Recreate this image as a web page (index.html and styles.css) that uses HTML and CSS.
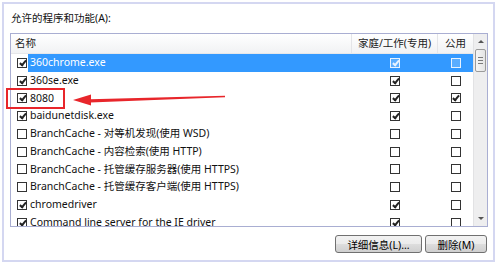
FILE: index.html
```html
<!DOCTYPE html>
<html lang="zh-CN">
<head>
    <meta charset="UTF-8">
    <title>允许的程序和功能</title>
    <link rel="stylesheet" href="styles.css">
</head>
<body>
    <div class="frame">
        <div class="caption">允许的程序和功能(A):</div>

        <div class="listbox">
            <div class="columns">
                <div class="row head">
                    <div class="cell name">名称</div>
                    <div class="cell mid">家庭/工作(专用)</div>
                    <div class="cell mid">公用</div>
                </div>

                <div class="row selected">
                    <div class="cell name"><span class="cb on"></span><span class="label">360chrome.exe</span></div>
                    <div class="cell mid"><span class="cb on"></span></div>
                    <div class="cell mid"><span class="cb"></span></div>
                </div>
                <div class="row">
                    <div class="cell name"><span class="cb on"></span><span class="label">360se.exe</span></div>
                    <div class="cell mid"><span class="cb on"></span></div>
                    <div class="cell mid"><span class="cb"></span></div>
                </div>
                <div class="row">
                    <div class="cell name"><span class="cb on"></span><span class="label">8080</span></div>
                    <div class="cell mid"><span class="cb on"></span></div>
                    <div class="cell mid"><span class="cb on"></span></div>
                </div>
                <div class="row">
                    <div class="cell name"><span class="cb on"></span><span class="label">baidunetdisk.exe</span></div>
                    <div class="cell mid"><span class="cb on"></span></div>
                    <div class="cell mid"><span class="cb"></span></div>
                </div>
                <div class="row">
                    <div class="cell name"><span class="cb"></span><span class="label">BranchCache - 对等机发现(使用 WSD)</span></div>
                    <div class="cell mid"><span class="cb"></span></div>
                    <div class="cell mid"><span class="cb"></span></div>
                </div>
                <div class="row">
                    <div class="cell name"><span class="cb"></span><span class="label">BranchCache - 内容检索(使用 HTTP)</span></div>
                    <div class="cell mid"><span class="cb"></span></div>
                    <div class="cell mid"><span class="cb"></span></div>
                </div>
                <div class="row">
                    <div class="cell name"><span class="cb"></span><span class="label">BranchCache - 托管缓存服务器(使用 HTTPS)</span></div>
                    <div class="cell mid"><span class="cb"></span></div>
                    <div class="cell mid"><span class="cb"></span></div>
                </div>
                <div class="row">
                    <div class="cell name"><span class="cb"></span><span class="label">BranchCache - 托管缓存客户端(使用 HTTPS)</span></div>
                    <div class="cell mid"><span class="cb"></span></div>
                    <div class="cell mid"><span class="cb"></span></div>
                </div>
                <div class="row">
                    <div class="cell name"><span class="cb on"></span><span class="label">chromedriver</span></div>
                    <div class="cell mid"><span class="cb on"></span></div>
                    <div class="cell mid"><span class="cb"></span></div>
                </div>
                <div class="row">
                    <div class="cell name"><span class="cb on"></span><span class="label">Command line server for the IE driver</span></div>
                    <div class="cell mid"><span class="cb on"></span></div>
                    <div class="cell mid"><span class="cb"></span></div>
                </div>
            </div>

            <div class="scrollbar">
                <div class="arrow up"></div>
                <div class="thumb"><span></span><span></span><span></span></div>
                <div class="track"></div>
                <div class="arrow down"></div>
            </div>
        </div>

        <div class="buttons">
            <button class="btn wide">详细信息(L)...</button>
            <button class="btn">删除(M)</button>
        </div>
    </div>

    <!-- annotation drawn over the dialog -->
    <div class="mark"></div>
    <svg class="pointer" width="499" height="265" viewBox="0 0 499 265">
        <polygon points="90,99.2 225,95.8 225,97.2 90,102.6" fill="#e8262b"/>
        <polygon points="73,100 91,94.5 91,105.5" fill="#e8262b"/>
    </svg>
</body>
</html>
```

FILE: styles.css
```css
:root {
    --frame-color: #d4d7f1;
    --list-border: #a9aed2;
    --select-blue: #3399ff;
    --text-color: #111111;
    --box-color: #333333;
}

body {
    margin: 0;
    background: #ffffff;
    font-family: "Noto Sans", "Noto Sans CJK SC", sans-serif;
    font-size: 10.5px;
    color: var(--text-color);
}

.frame {
    box-sizing: border-box;
    width: 493px;
    height: 260px;
    margin: 2px 0 0 2px;
    border: 2px solid var(--frame-color);
    padding: 7px 0 0 6px;
}

.caption {
    height: 14px;
    line-height: 14px;
    padding-left: 1px;
}

.listbox {
    box-sizing: border-box;
    width: 478px;
    height: 194px;
    margin-top: 8px;
    border: 1px solid var(--list-border);
    display: flex;
    overflow: hidden;
}

.columns {
    flex: 1;
}

.row {
    display: grid;
    grid-template-columns: 341px 86px 35px;
    height: 17.75px;
    line-height: 17.75px;
    white-space: nowrap;
}

.row.head {
    height: 19px;
    line-height: 19px;
    background: linear-gradient(#ffffff, #f1f2f4);
    border-bottom: 1px solid #e6e7ea;
    color: #222;
}

.row.head .cell {
    border-right: 1px solid #e4e5e8;
}

.row.head .name {
    padding-left: 4px;
}

.row.head .mid:last-child {
    border-right: none;
}

.cell {
    display: flex;
    align-items: center;
    overflow: hidden;
}

.cell.mid {
    justify-content: center;
}

.row .name {
    padding-left: 6px;
}

.label {
    flex: 1;
    align-self: stretch;
    padding-left: 2px;
    margin-left: 1px;
}

.row.selected .label,
.row.selected .mid {
    background: var(--select-blue);
    color: #ffffff;
}

.cb {
    box-sizing: border-box;
    width: 10px;
    height: 10px;
    border: 1px solid var(--box-color);
    background: #ffffff;
    position: relative;
    flex: none;
}

.cb.on::after {
    content: "";
    position: absolute;
    left: 2.5px;
    top: 0px;
    width: 2px;
    height: 5px;
    border-right: 2px solid #222;
    border-bottom: 2px solid #222;
    transform: rotate(40deg);
}

.row.selected .mid .cb {
    border-color: #e6f2ff;
    background: #5aadff;
}

.row.selected .mid .cb.on::after {
    border-color: #e6f2ff;
}

.scrollbar {
    width: 14px;
    display: flex;
    flex-direction: column;
    align-items: center;
    background: #eeeeef;
    border-left: 1px solid #e2e2e4;
}

.arrow {
    height: 15px;
    width: 100%;
    position: relative;
}

.arrow::after {
    content: "";
    position: absolute;
    left: 4px;
    border-left: 3px solid transparent;
    border-right: 3px solid transparent;
}

.arrow.up::after {
    top: 6px;
    border-bottom: 3px solid #555;
}

.arrow.down {
    height: 14px;
}

.arrow.down::after {
    top: 5px;
    border-top: 3px solid #555;
}

.thumb {
    box-sizing: border-box;
    width: 11px;
    height: 23px;
    border: 1px solid #9b9b9b;
    border-radius: 2px;
    background: linear-gradient(to right, #f6f6f6, #e4e4e4);
    display: flex;
    flex-direction: column;
    align-items: center;
    justify-content: center;
    gap: 2px;
}

.thumb span {
    width: 5px;
    height: 1px;
    background: #7a7a7a;
}

.track {
    flex: 1;
}

.buttons {
    display: flex;
    justify-content: flex-end;
    gap: 3px;
    width: 477px;
    margin-top: 8px;
}

.btn {
    box-sizing: border-box;
    height: 18px;
    width: 62px;
    padding: 0;
    font-family: inherit;
    font-size: 10.5px;
    color: #000;
    border: 1px solid #707070;
    border-radius: 3px;
    background: linear-gradient(#f2f2f2 0%, #ebebeb 50%, #dddddd 51%, #cfcfcf 100%);
}

.btn.wide {
    width: 87px;
}

.mark {
    position: absolute;
    left: 6px;
    top: 88px;
    width: 59px;
    height: 21px;
    box-sizing: border-box;
    border: 2px solid #e8262b;
}

.pointer {
    position: absolute;
    left: 0;
    top: 0;
    pointer-events: none;
}
```
